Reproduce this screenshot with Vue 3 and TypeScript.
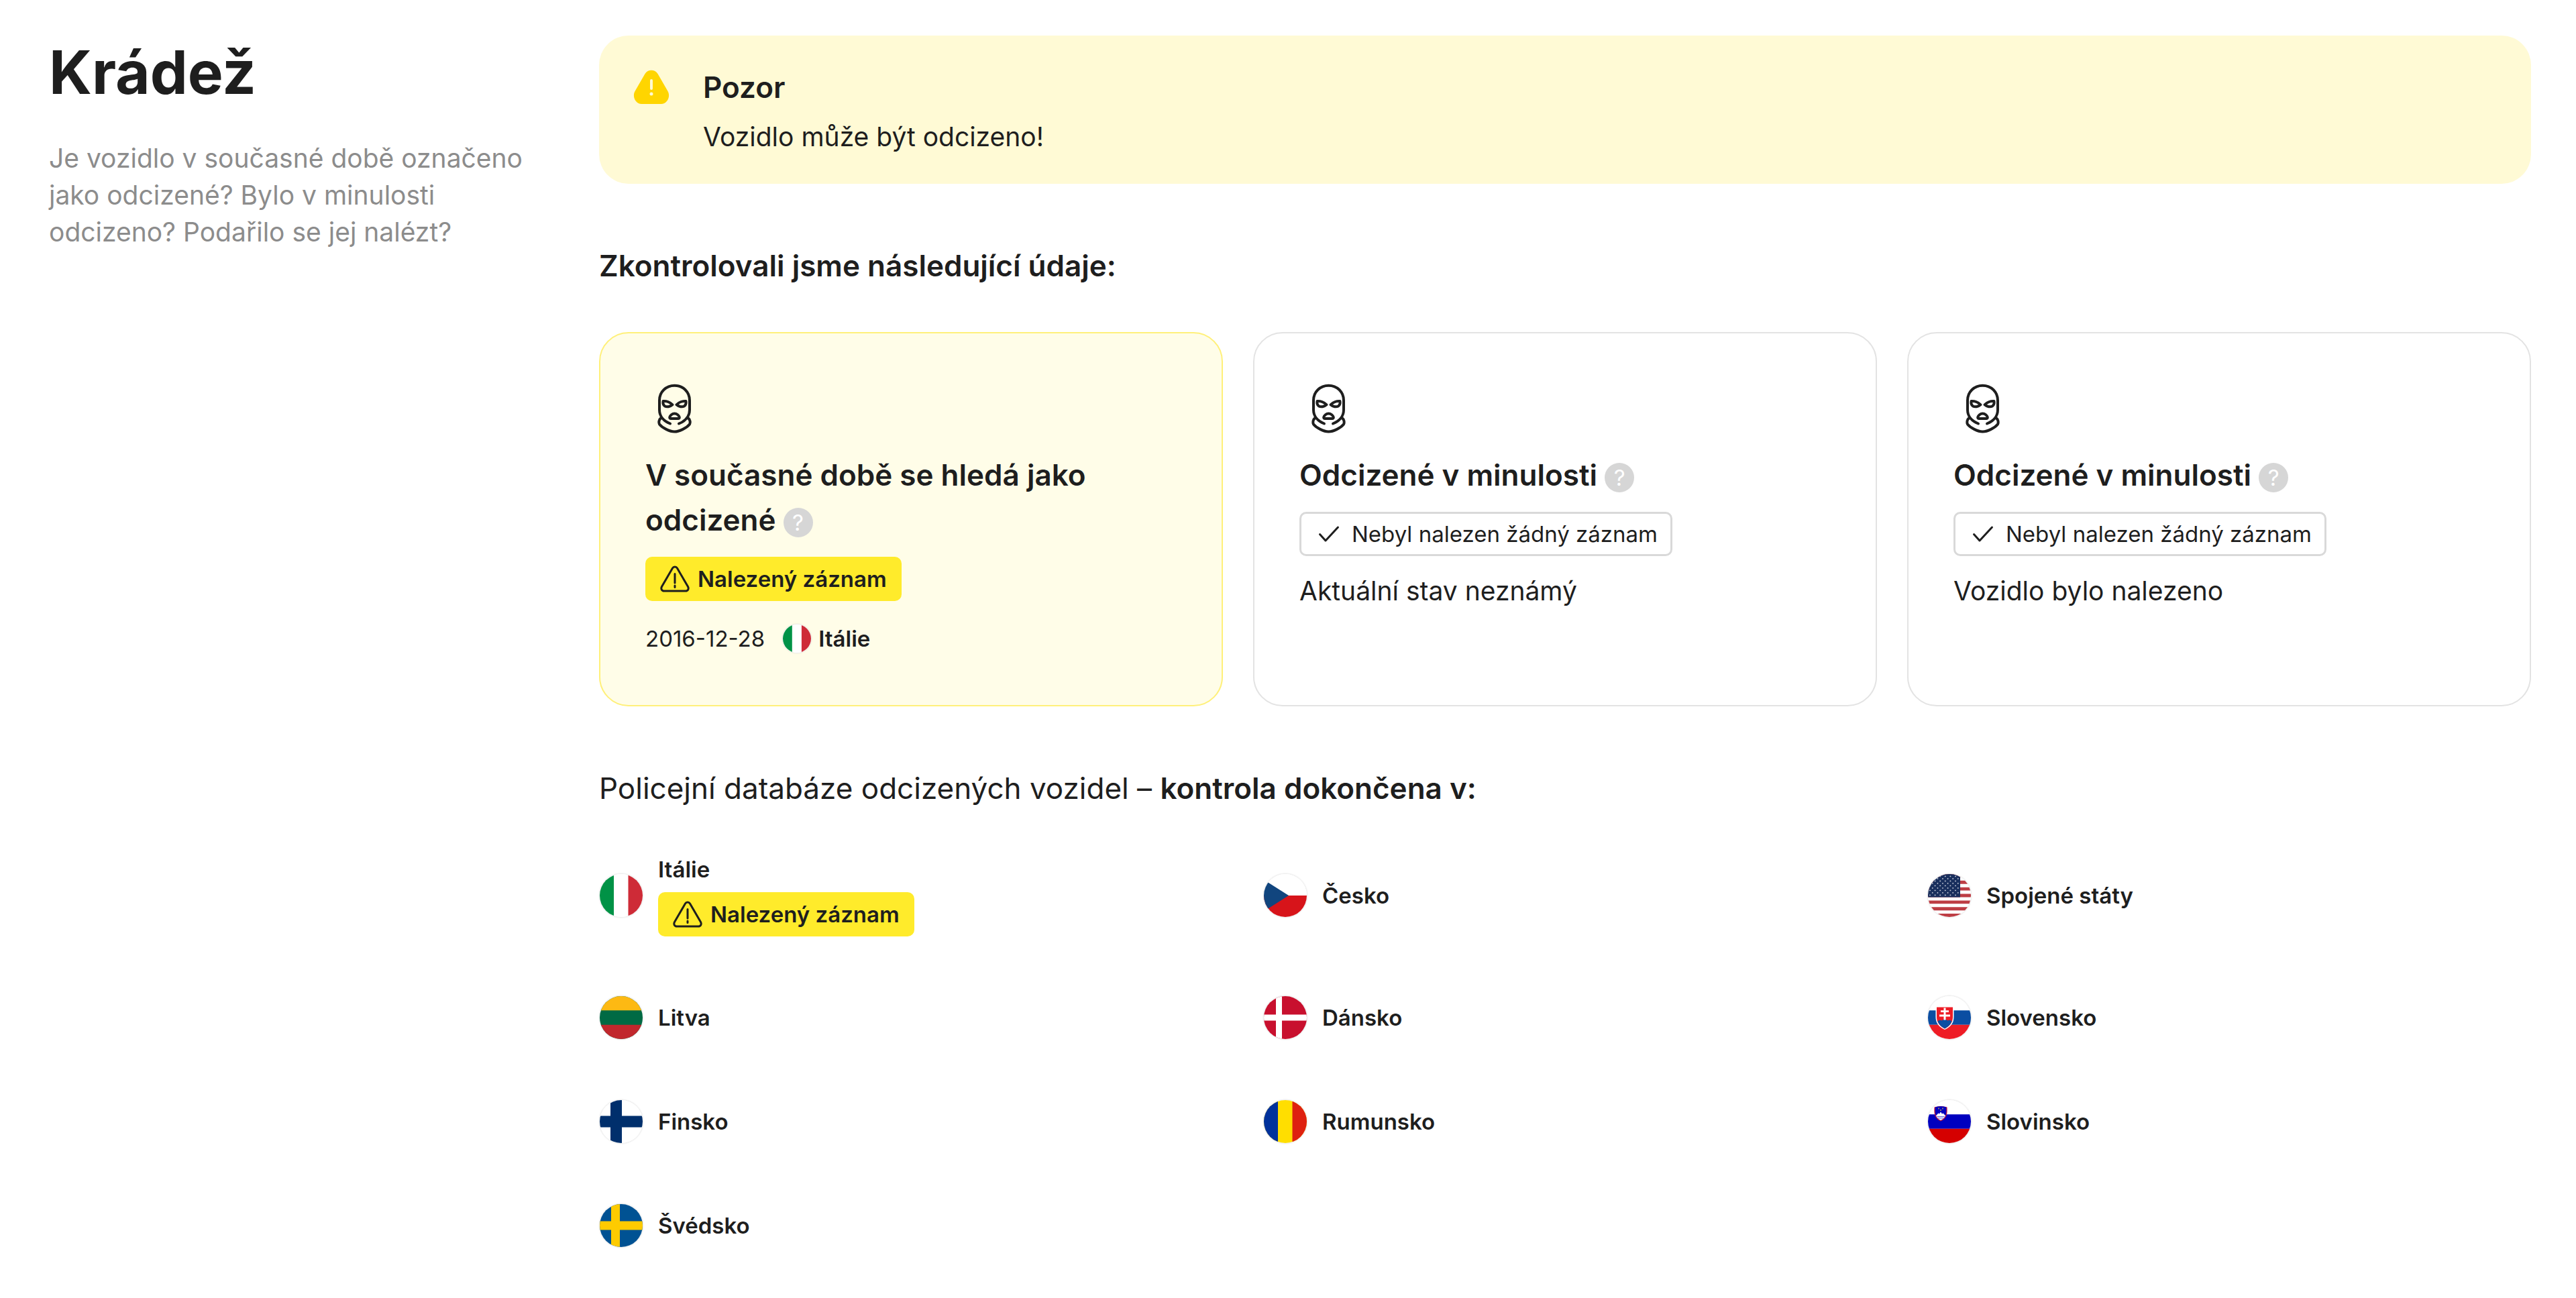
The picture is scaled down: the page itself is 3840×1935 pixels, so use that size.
<script setup lang="ts">
interface Shape {
  d: string
  fill: string
}

interface Country {
  code: string
  name: string
  found?: boolean
}

interface Check {
  id: number
  title: string
  found: boolean
  note?: string
  date?: string
  country?: Country
}

const italy: Country = { code: 'it', name: 'Itálie', found: true }

const checks: Check[] = [
  { id: 1, title: 'V současné době se hledá jako odcizené', found: true, date: '2016-12-28', country: italy },
  { id: 2, title: 'Odcizené v minulosti', found: false, note: 'Aktuální stav neznámý' },
  { id: 3, title: 'Odcizené v minulosti', found: false, note: 'Vozidlo bylo nalezeno' },
]

const countries: Country[] = [
  italy,
  { code: 'cz', name: 'Česko' },
  { code: 'us', name: 'Spojené státy' },
  { code: 'lt', name: 'Litva' },
  { code: 'dk', name: 'Dánsko' },
  { code: 'sk', name: 'Slovensko' },
  { code: 'fi', name: 'Finsko' },
  { code: 'ro', name: 'Rumunsko' },
  { code: 'si', name: 'Slovinsko' },
  { code: 'se', name: 'Švédsko' },
]

const full = 'M0 0H64V64H0Z'

// Seven red stripes, each one thirteenth of the flag's height
const stripes = Array.from({ length: 7 }, (_, i) => `M0 ${(i * 128) / 13}h64v${64 / 13}h-64z`).join('')

// Staggered rows of small diamonds in the blue canton
const stars = Array.from({ length: 9 }, (_, row) =>
  Array.from({ length: 7 }, (_, col) => {
    const x = 3 + col * 7.6 + (row % 2) * 3.8
    const y = 3.4 + row * 3.5
    return x < 47 ? `M${x} ${y - 1.2}l1.2 1.2l-1.2 1.2l-1.2 -1.2z` : ''
  }).join(''),
).join('')

const flags: Record<string, Shape[]> = {
  it: [
    { d: full, fill: '#ffffff' },
    { d: 'M0 0H21V64H0Z', fill: '#009246' },
    { d: 'M42.5 0H64V64H42.5Z', fill: '#ce2b37' },
  ],
  cz: [
    { d: full, fill: '#ffffff' },
    { d: 'M0 32H64V64H0Z', fill: '#d7141a' },
    { d: 'M0 8.4L37 32L0 55.6Z', fill: '#11457e' },
  ],
  us: [
    { d: full, fill: '#ffffff' },
    { d: stripes, fill: '#bd3d44' },
    { d: 'M0 0H48V34.5H0Z', fill: '#192f5d' },
    { d: stars, fill: '#c4cad8' },
  ],
  lt: [
    { d: full, fill: '#006a44' },
    { d: 'M0 0H64V21.3H0Z', fill: '#fdb913' },
    { d: 'M0 42.7H64V64H0Z', fill: '#c1272d' },
  ],
  dk: [
    { d: full, fill: '#c8102e' },
    { d: 'M18 0H27V64H18ZM0 27.5H64V36.5H0Z', fill: '#ffffff' },
  ],
  sk: [
    { d: full, fill: '#ffffff' },
    { d: 'M0 21.3H64V42.7H0Z', fill: '#0b4ea2' },
    { d: 'M0 42.7H64V64H0Z', fill: '#ee1c25' },
    { d: 'M11.5 15.5H38.5V31C38.5 40 34 46 25 50C16 46 11.5 40 11.5 31Z', fill: '#ffffff' },
    { d: 'M13 16.5H37V31C37 39 33 44.5 25 48.4C17 44.5 13 39 13 31Z', fill: '#ee1c25' },
    { d: 'M14.5 37.5C16.5 35.5 19 35.5 20.5 36.5C22 34.5 28 34.5 29.5 36.5C31 35.5 33.5 35.5 35.5 37.5C33.5 42.5 30 46 25 48.4C20 46 16.5 42.5 14.5 37.5Z', fill: '#0b4ea2' },
    { d: 'M23.5 17.5H26.5V21.2H31V24H26.5V27.5H33V30.5H26.5V35.5H23.5V30.5H17V27.5H23.5V24H19V21.2H23.5Z', fill: '#ffffff' },
  ],
  fi: [
    { d: full, fill: '#ffffff' },
    { d: 'M16 0H33V64H16ZM0 23.5H64V40.5H0Z', fill: '#002f6c' },
  ],
  ro: [
    { d: full, fill: '#ffde00' },
    { d: 'M0 0H21V64H0Z', fill: '#00319c' },
    { d: 'M42.5 0H64V64H42.5Z', fill: '#de2110' },
  ],
  si: [
    { d: full, fill: '#ffffff' },
    { d: 'M0 21.3H64V42.7H0Z', fill: '#0000bf' },
    { d: 'M0 42.7H64V64H0Z', fill: '#d50000' },
    { d: 'M9.5 10.5Q19 7.5 28.5 10.5C29 19 29 27 19 31.5C9 27 9 19 9.5 10.5Z', fill: '#c0143c' },
    { d: 'M10.8 10.5Q19 8 27.2 10.5C27.8 19 27.5 26 19 30C10.5 26 10.2 19 10.8 10.5Z', fill: '#0000bf' },
    { d: 'M12 23L15.5 19.5L17 20.5L19 17.5L21 20.5L22.5 19.5L26 23C25 26 22.5 28.5 19 30C15.5 28.5 13 26 12 23Z', fill: '#ffffff' },
    { d: 'M13.5 24H24.5V25.2H13.5ZM15 26.6H23V27.6H15Z', fill: '#6a6ae0' },
    { d: 'M15 11.5h2v2h-2zM21 11.5h2v2h-2zM18 14h2v2h-2z', fill: '#8b7a70' },
  ],
  se: [
    { d: full, fill: '#005293' },
    { d: 'M17 0H30V64H17ZM0 25.5H64V38.5H0Z', fill: '#fecb00' },
  ],
}
</script>

<template>
  <section class="page">
    <aside class="intro">
      <h1>Krádež</h1>
      <p>Je vozidlo v současné době označeno jako odcizené? Bylo v minulosti odcizeno? Podařilo se jej nalézt?</p>
    </aside>

    <main class="content">
      <div class="alert" role="alert">
        <svg class="alert-icon" viewBox="0 0 54 54" aria-hidden="true">
          <path d="M17.5 7C21.5 0 32.5 0 36.5 7L51.5 33C56 41 50.5 52 41.5 52H12.5C3.5 52 -2 41 2.5 33Z" fill="#ffd500" />
          <path d="M27 17V29" stroke="#fffad5" stroke-width="4" stroke-linecap="round" />
          <circle cx="27" cy="37" r="2.5" fill="#fffad5" />
        </svg>
        <div class="alert-text">
          <h2>Pozor</h2>
          <p>Vozidlo může být odcizeno!</p>
        </div>
      </div>

      <h2 class="section-title">Zkontrolovali jsme následující údaje:</h2>

      <div class="cards">
        <article v-for="check in checks" :key="check.id" class="card" :class="{ 'card-found': check.found }">
          <svg class="mask" viewBox="0 0 88 88" aria-hidden="true">
            <path d="M37 66.5C28 63 21 56 21 46V32C21 19 31 9.7 43.5 9.7S66 19 66 32V46C66 56 59 63 50 66.5" />
            <path d="M23 58.5C20 60.5 19.8 65 21 67.5C25 72.5 36 78.5 43.5 78.5S62 72.5 66 67.5C67.2 65 67 60.5 64 58.5" />
            <path d="M26.5 33C31 32.5 37 34.5 40.5 38.3C37 41.5 32 42 29 40.5C27 39 26 36 26.5 33Z" />
            <path d="M60.5 33C56 32.5 50 34.5 46.5 38.3C50 41.5 55 42 58 40.5C60 39 61 36 60.5 33Z" />
            <path d="M43.5 51.5C40 51.5 37 54.5 36.2 57C36 58.3 37 59 38 59H49C50 59 51 58.3 50.8 57C50 54.5 47 51.5 43.5 51.5Z" />
          </svg>
          <h3>{{ check.title }} <button type="button" class="help" aria-label="Nápověda">?</button></h3>

          <span v-if="check.found" class="badge badge-found">
            <svg viewBox="0 0 44 44" aria-hidden="true">
              <path d="M18.5 6C20 3.3 24 3.3 25.5 6L41.5 33.5C43.2 36.8 41.5 40 38 40H6C2.5 40 0.8 36.8 2.5 33.5Z" />
              <path d="M22 14.5V28M22 32V34.5" />
            </svg>
            Nalezený záznam
          </span>
          <span v-else class="badge badge-clear">
            <svg viewBox="0 0 44 44" aria-hidden="true">
              <path d="M8.5 22.5L17 32L35.5 12" />
            </svg>
            Nebyl nalezen žádný záznam
          </span>

          <p v-if="check.note" class="note">{{ check.note }}</p>
          <p v-if="check.country" class="record">
            <time :datetime="check.date">{{ check.date }}</time>
            <span class="flag flag-small">
              <svg viewBox="0 0 64 64" aria-hidden="true">
                <path v-for="(shape, i) in flags[check.country.code]" :key="i" :d="shape.d" :fill="shape.fill" />
              </svg>
            </span>
            <strong>{{ check.country.name }}</strong>
          </p>
        </article>
      </div>

      <h2 class="section-title"><span>Policejní databáze odcizených vozidel – </span>kontrola dokončena v:</h2>

      <ul class="countries">
        <li v-for="country in countries" :key="country.code">
          <span class="flag">
            <svg viewBox="0 0 64 64" aria-hidden="true">
              <path v-for="(shape, i) in flags[country.code]" :key="i" :d="shape.d" :fill="shape.fill" />
            </svg>
          </span>
          <div class="country-text">
            <strong>{{ country.name }}</strong>
            <span v-if="country.found" class="badge badge-found">
              <svg viewBox="0 0 44 44" aria-hidden="true">
                <path d="M18.5 6C20 3.3 24 3.3 25.5 6L41.5 33.5C43.2 36.8 41.5 40 38 40H6C2.5 40 0.8 36.8 2.5 33.5Z" />
                <path d="M22 14.5V28M22 32V34.5" />
              </svg>
              Nalezený záznam
            </span>
          </div>
        </li>
      </ul>
    </main>
  </section>
</template>

<style>
body {
  margin: 0;
  background: #ffffff;
}
</style>

<style scoped>
.page {
  box-sizing: border-box;
  display: grid;
  grid-template-columns: minmax(0, 752fr) minmax(0, 2880fr);
  column-gap: 68px;
  padding: 53px 67px 70px 73px;
  color: #1e1e1e;
  font-family: Inter, "Liberation Sans", sans-serif;
  font-size: 39px;
  line-height: 55px;
}

h1,
h2,
h3,
p,
ul {
  margin: 0;
}

h1 {
  margin-bottom: 45px;
  font-size: 89px;
  font-weight: 700;
  line-height: 110px;
}

h2,
h3 {
  font-size: 44px;
  font-weight: 600;
  line-height: 68px;
}

strong {
  font-weight: 600;
}

.intro p {
  color: #8c8c8c;
}

.alert {
  display: flex;
  gap: 50px;
  padding: 43px 51px;
  border-radius: 44px;
  background: #fffad5;
}

.alert-icon {
  flex: none;
  width: 54px;
  height: 68px;
}

.alert-text {
  display: flex;
  flex-direction: column;
  gap: 12px;
}

.section-title {
  margin: 88px 0 65px;
}

.section-title span {
  font-weight: 400;
}

.cards {
  display: grid;
  grid-template-columns: repeat(3, minmax(0, 1fr));
  gap: 45px;
}

.card {
  display: flex;
  flex-direction: column;
  align-items: flex-start;
  padding: 68px 67px 75px;
  border: 2px solid #e3e3e3;
  border-radius: 44px;
}

.card-found {
  border-color: #fff07a;
  background: #fffde8;
}

.mask {
  width: 88px;
  height: 88px;
  margin-bottom: 22px;
  fill: none;
  stroke: #1e1e1e;
  stroke-width: 4;
  stroke-linecap: round;
  stroke-linejoin: round;
}

.card h3 {
  margin-bottom: 21px;
  line-height: 67px;
}

.help {
  width: 44px;
  height: 44px;
  padding: 0;
  border: 0;
  border-radius: 50%;
  background: #d6d6d6;
  color: #ffffff;
  font-family: inherit;
  font-size: 33px;
  line-height: 44px;
  vertical-align: middle;
}

.badge {
  box-sizing: border-box;
  display: inline-flex;
  align-items: center;
  gap: 12px;
  height: 66px;
  padding: 0 22px;
  border-radius: 10px;
  font-size: 33px;
  line-height: 44px;
  white-space: nowrap;
}

.badge svg {
  width: 44px;
  height: 44px;
  fill: none;
  stroke: #1e1e1e;
  stroke-width: 3;
  stroke-linecap: round;
  stroke-linejoin: round;
}

.badge-found {
  background: #ffeb2b;
  font-weight: 600;
}

.badge-clear {
  padding: 0 19px;
  border: 3px solid #d9d9d9;
  background: #ffffff;
}

.note {
  margin-top: 24px;
}

.record {
  display: flex;
  align-items: center;
  margin-top: 32px;
  font-size: 33px;
  line-height: 48px;
}

.record time {
  margin-right: 26px;
}

.flag {
  flex: none;
  box-sizing: border-box;
  width: 66px;
  height: 66px;
  overflow: hidden;
  border: 1px solid #eeeeee;
  border-radius: 50%;
  box-shadow: 0 0 2px rgba(0, 0, 0, 0.12);
}

.flag-small {
  width: 44px;
  height: 44px;
  margin-right: 10px;
}

.flag svg {
  display: block;
  width: 100%;
  height: 100%;
}

.countries {
  display: grid;
  grid-template-columns: repeat(3, minmax(0, 1fr));
  gap: 87px 90px;
  padding: 0;
  list-style: none;
  font-size: 33px;
  line-height: 44px;
}

.countries li {
  display: flex;
  align-items: center;
  gap: 22px;
  min-height: 68px;
}

.country-text {
  display: flex;
  flex-direction: column;
  align-items: flex-start;
  gap: 12px;
}

@media (max-width: 1800px) {
  .page {
    grid-template-columns: minmax(0, 1fr);
    row-gap: 68px;
  }

  .cards,
  .countries {
    grid-template-columns: repeat(auto-fit, minmax(560px, 1fr));
  }
}
</style>
